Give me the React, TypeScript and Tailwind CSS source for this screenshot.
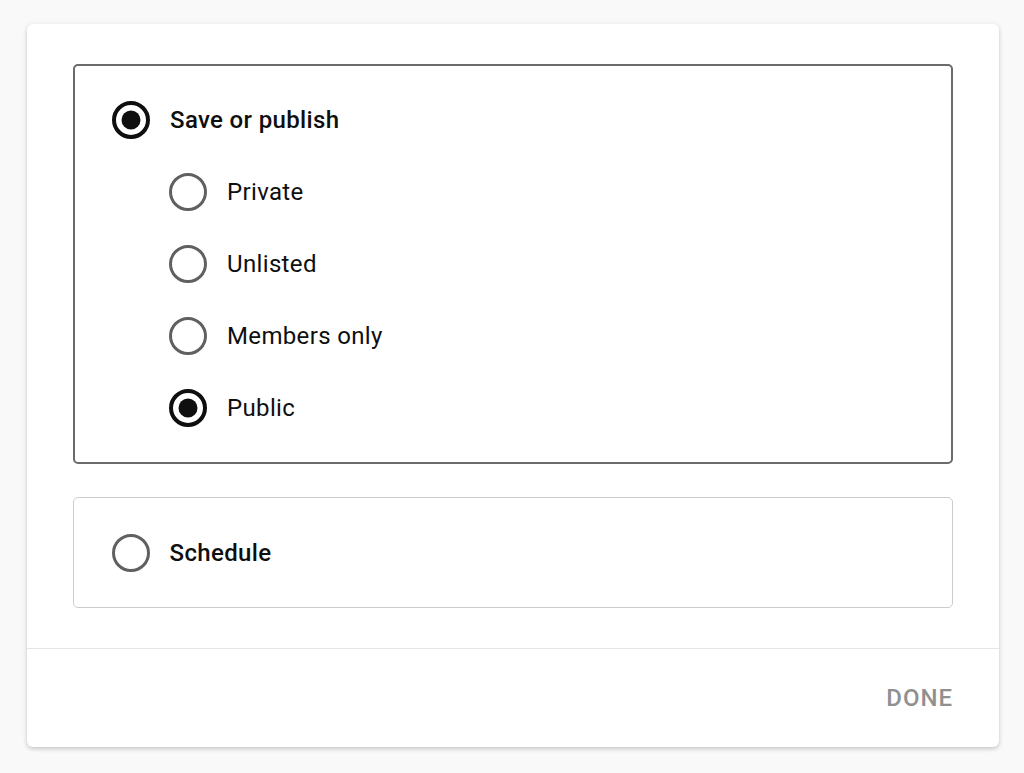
import React from "react";

type Option = { id: string; label: string };

const visibility: Option[] = [
  { id: "private", label: "Private" },
  { id: "unlisted", label: "Unlisted" },
  { id: "members", label: "Members only" },
  { id: "public", label: "Public" },
];

function Radio({ checked }: { checked: boolean }) {
  return (
    <svg width="38" height="38" viewBox="0 0 38 38" className="shrink-0">
      <circle
        cx="19"
        cy="19"
        r={checked ? 17 : 17.5}
        fill="none"
        stroke={checked ? "#0f0f0f" : "#606060"}
        strokeWidth={checked ? 4 : 3}
      />
      {checked && <circle cx="19" cy="19" r="9.5" fill="#0f0f0f" />}
    </svg>
  );
}

function Row({ label, checked, bold }: { label: string; checked: boolean; bold?: boolean }) {
  return (
    <div className="flex h-[72px] items-center gap-[20px]">
      <Radio checked={checked} />
      <span
        className={`text-[24px] leading-none tracking-[0.35px] text-[#0f0f0f] ${bold ? "font-medium" : "font-normal"}`}
      >
        {label}
      </span>
    </div>
  );
}

export default function App() {
  const selected = "public";

  return (
    <div
      className="min-h-[773px] w-full bg-[#f9f9f9] pl-[27px] pr-[25px] pt-[24px]"
      style={{ fontFamily: "Roboto, 'Liberation Sans', sans-serif" }}
    >
      <div className="flex h-[723px] flex-col rounded-[6px] bg-white shadow-[0_2px_4px_rgba(0,0,0,0.18),0_0_8px_rgba(0,0,0,0.04)]">
        <div className="flex flex-col gap-[33px] px-[46px] pb-[40px] pt-[40px]">
          <div className="rounded-[5px] border-[2px] border-[#6b6b6b] py-[18px] pl-[37px]">
            <Row label="Save or publish" checked bold />
            <div className="pl-[57px]">
              {visibility.map((o) => (
                <Row key={o.id} label={o.label} checked={o.id === selected} />
              ))}
            </div>
          </div>
          <div className="rounded-[5px] border-[1.5px] border-[#cccccc] py-[18.5px] pl-[37.5px]">
            <Row label="Schedule" checked={false} bold />
          </div>
        </div>
        <div className="flex flex-1 items-center justify-end border-t border-[#e5e5e5] pr-[46px]">
          <button className="text-[24px] font-medium tracking-[0.04em] text-[#909090]">DONE</button>
        </div>
      </div>
    </div>
  );
}
